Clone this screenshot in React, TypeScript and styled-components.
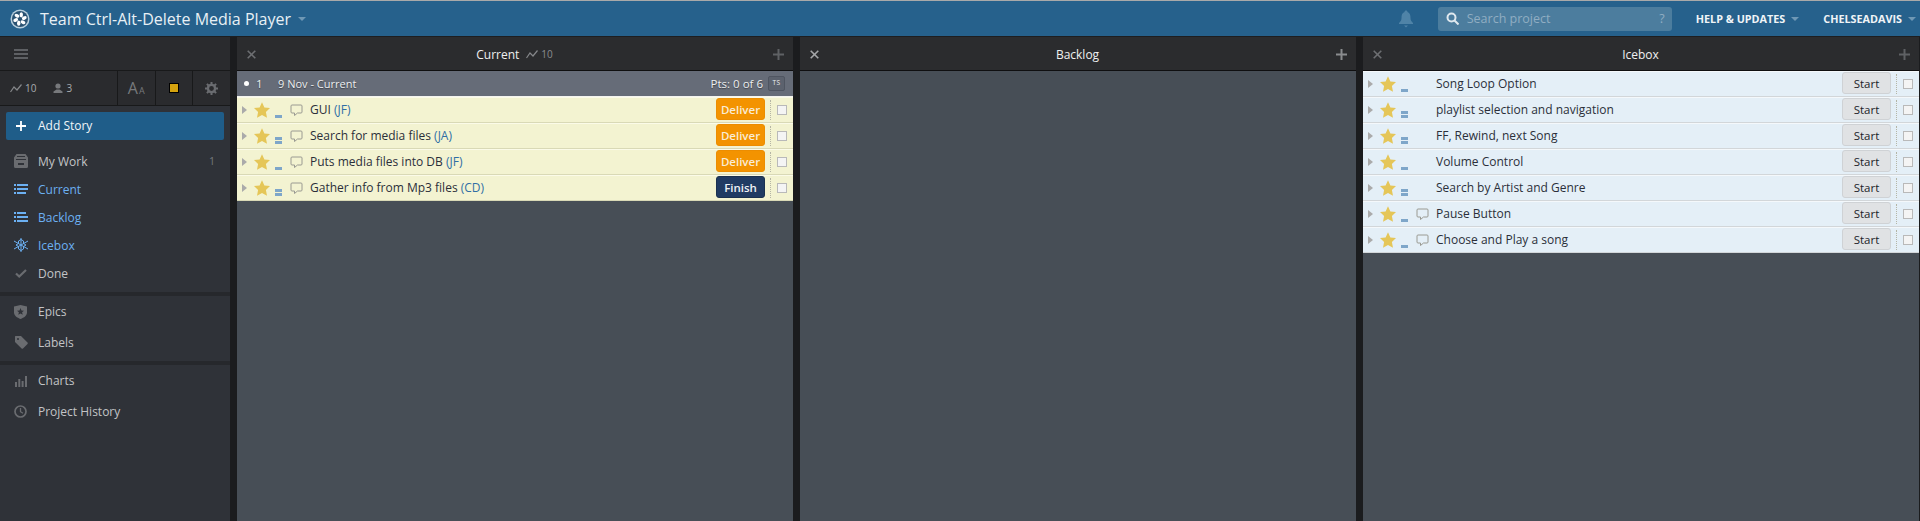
import React from "react";
import styled, { createGlobalStyle } from "styled-components";

const Global = createGlobalStyle`
  html, body {
    margin: 0;
    height: 100%;
    overflow: hidden;
    background: #1b1c1e;
    font-family: "Open Sans", "Liberation Sans", sans-serif;
  }
  * { box-sizing: border-box; }
`;

const Page = styled.div`
  width: 1920px;
  height: 521px;
  display: flex;
  flex-direction: column;
  overflow: hidden;
`;

const TopBar = styled.header`
  height: 37px;
  flex: none;
  background: #26618c;
  border-top: 1px solid #a9a9a9;
  border-bottom: 1px solid #1d1e20;
  display: flex;
  align-items: center;
  padding: 0 4px 0 10px;
  color: #fff;
`;
const Logo = styled.svg`
  width: 20px;
  height: 20px;
  flex: none;
`;
const ProjectName = styled.div`
  margin-left: 10px;
  font-size: 16px;
  line-height: 24px;
  color: #e8f0f5;
`;
const Caret = styled.span`
  display: inline-block;
  width: 0;
  height: 0;
  margin-left: ${(p) => p.$gap ?? 6}px;
  border-left: 4px solid transparent;
  border-right: 4px solid transparent;
  border-top: 4px solid #6f98b5;
`;
const TopRight = styled.div`
  margin-left: auto;
  display: flex;
  align-items: center;
`;
const Bell = styled.svg`
  width: 14px;
  height: 18px;
  margin-right: 25px;
`;
const Search = styled.div`
  width: 234px;
  height: 24px;
  border-radius: 3px;
  background: #4c7d9e;
  display: flex;
  align-items: center;
  padding: 0 7px 0 8px;
  font-size: 12.5px;
  color: #90adc2;
`;
const SearchText = styled.span`
  margin-left: 8px;
  flex: 1;
`;
const TopLink = styled.div`
  font-size: 10.8px;
  font-weight: 700;
  color: #f0f4f7;
  margin-left: 24px;
  display: flex;
  align-items: center;
`;

const Main = styled.div`
  flex: 1;
  display: flex;
  min-height: 0;
`;

const Sidebar = styled.aside`
  width: 230px;
  flex: none;
  background: #2f3238;
  display: flex;
  flex-direction: column;
`;
const SideTop = styled.div`
  height: 34px;
  background: #2a2b2e;
  border-bottom: 1px solid #18191a;
  display: flex;
  align-items: center;
  padding-left: 14px;
`;
const Hamburger = styled.span`
  width: 14px;
  height: 10px;
  border-top: 2px solid #5e6064;
  border-bottom: 2px solid #5e6064;
  position: relative;
  &::after {
    content: "";
    position: absolute;
    left: 0;
    right: 0;
    top: 2px;
    height: 2px;
    background: #5e6064;
  }
`;
const StatRow = styled.div`
  height: 35px;
  background: #2a2b2e;
  border-bottom: 1px solid #18191a;
  display: flex;
  align-items: stretch;
`;
const Stats = styled.div`
  flex: 1;
  display: flex;
  align-items: center;
  padding-left: 10px;
  font-size: 10px;
  color: #a9abae;
`;
const Stat = styled.span`
  display: flex;
  align-items: center;
  gap: 3px;
  margin-right: 17px;
`;
const ToolCell = styled.div`
  width: 37.7px;
  border-left: 1px solid #18191a;
  display: flex;
  align-items: center;
  justify-content: center;
  color: #77797c;
`;
const FontBig = styled.span`
  font-size: 16px;
  line-height: 1;
`;
const FontSmall = styled.span`
  font-size: 9px;
  margin-left: 1px;
  line-height: 1;
  align-self: center;
  padding-top: 4px;
`;
const Swatch = styled.span`
  width: 10px;
  height: 10px;
  background: #d5a30f;
  border: 1px solid #000;
`;
const AddStory = styled.div`
  height: 28px;
  margin: 6px 6px 0;
  padding: 0 0 1px 10px;
  border-radius: 2px;
  background: #1f5d89;
  color: #f0f5f8;
  font-size: 12px;
  display: flex;
  align-items: center;
  gap: 12px;
`;
const NavGroup = styled.nav`
  display: flex;
  flex-direction: column;
  padding: ${(p) => p.$pad};
  border-bottom: ${(p) => (p.$line ? "4px solid #26282c" : "none")};
`;
const NavItem = styled.div`
  height: ${(p) => p.$h}px;
  display: flex;
  align-items: center;
  padding: 0 14px;
  font-size: 12px;
  color: ${(p) => (p.$active ? "#6cb0f2" : "#c3c4c6")};
`;
const NavIcon = styled.span`
  width: 24px;
  flex: none;
  display: flex;
  color: ${(p) => (p.$active ? "#6cb0f2" : "#6a6c70")};
`;
const NavCount = styled.span`
  margin-left: auto;
  font-size: 10.5px;
  color: #777a7e;
  margin-right: 1px;
`;

const Gutter = styled.div`
  width: 7px;
  flex: none;
  background: #1b1c1e;
`;
const Panel = styled.section`
  flex: none;
  width: 556px;
  display: flex;
  flex-direction: column;
  background: #474e56;
`;
const PanelHead = styled.div`
  height: 34px;
  flex: none;
  background: #2b2c2e;
  border-bottom: 1px solid #0f0f10;
  display: flex;
  align-items: center;
  justify-content: space-between;
  padding: 1px 9px 0 10px;
`;
const PanelTitle = styled.div`
  display: flex;
  align-items: center;
  font-size: 12px;
  color: #f0f0f0;
  gap: 7px;
`;
const PanelStat = styled.span`
  display: flex;
  align-items: center;
  gap: 3px;
  font-size: 10px;
  color: #8a8c8f;
`;
const IterationHead = styled.div`
  height: 26px;
  flex: none;
  background: #666c78;
  border-bottom: 1px solid #f4f4f0;
  color: #eceef0;
  font-size: 11px;
  display: flex;
  align-items: center;
  padding: 0 8px 0 7px;
  text-shadow: 0 1px 1px #3d4148;
`;
const Dot = styled.span`
  width: 5px;
  height: 5px;
  border-radius: 50%;
  background: #fff;
`;
const IterNum = styled.span`
  margin-left: 7px;
  width: 22px;
  font-size: 11.5px;
`;
const Pts = styled.span`
  margin-left: auto;
  font-size: 11.5px;
`;
const TsBadge = styled.span`
  margin-left: 5px;
  width: 17px;
  height: 15px;
  border: 1px solid #4f5561;
  border-radius: 2px;
  background: #5c626e;
  font-size: 6.5px;
  line-height: 12px;
  text-align: center;
  letter-spacing: 0.5px;
  text-shadow: none;
`;
const Row = styled.div`
  height: 26px;
  flex: none;
  display: flex;
  align-items: center;
  background: ${(p) => (p.$cold ? "#e4eff7" : "#f3f3d1")};
  border-top: 1px solid ${(p) => (p.$cold ? "#f4f8fb" : "#fbfbe8")};
  border-bottom: 1px solid ${(p) => (p.$cold ? "#d2d6d9" : "#d9d9b6")};
  padding-left: 5px;
`;
const Expander = styled.span`
  width: 0;
  height: 0;
  border-top: 4px solid transparent;
  border-bottom: 4px solid transparent;
  border-left: 5px solid #aaa;
  flex: none;
`;
const Star = styled.svg`
  width: 16px;
  height: 16px;
  margin-left: 7px;
  flex: none;
`;
const Estimate = styled.span`
  width: 7px;
  margin-left: 5px;
  flex: none;
  align-self: flex-end;
  margin-bottom: 4px;
  display: flex;
  flex-direction: column;
  gap: 1px;
`;
const EstimateBar = styled.span`
  height: 3px;
  background: #7ea6c9;
`;
const Comment = styled.svg`
  width: 13px;
  height: 13px;
  margin-left: 8px;
  flex: none;
`;
const NoComment = styled.span`
  width: 13px;
  margin-left: 8px;
  flex: none;
`;
const Title = styled.div`
  margin-left: 7px;
  padding-bottom: 1px;
  font-size: 12px;
  color: #2b2f3a;
`;
const Owner = styled.span`
  color: #2f6ea5;
`;
const ActionButton = styled.div`
  margin-left: auto;
  margin-bottom: 2px;
  width: 49px;
  height: 22px;
  border-radius: 3px;
  display: flex;
  align-items: center;
  justify-content: center;
  font-size: 11.5px;
  font-weight: ${(p) => (p.$kind === "start" ? 400 : 600)};
  background: ${(p) =>
    p.$kind === "deliver" ? "#f39300" : p.$kind === "finish" ? "#203b63" : "#e0e2e4"};
  color: ${(p) => (p.$kind === "start" ? "#20232a" : p.$kind === "finish" ? "#eef2f6" : "#f9ecd6")};
  border: 1px solid
    ${(p) => (p.$kind === "deliver" ? "#ec8d00" : p.$kind === "finish" ? "#1a3150" : "#cfd2d5")};
`;
const CheckCell = styled.div`
  margin-left: 5px;
  width: 23px;
  height: 20px;
  flex: none;
  border-left: 1px dotted #b5b5a5;
  display: flex;
  align-items: center;
  justify-content: flex-end;
  padding-right: 6px;
`;
const Check = styled.span`
  width: 10px;
  height: 10px;
  background: #f4f4f4;
  border: 1px solid #b9b9b9;
`;

const StarIcon = () => (
  <Star viewBox="0 0 16 16">
    <polygon points="8,0.3 10.4,5.4 16,6.100 11.900,10 13,15.700 8,12.900 3,15.700 4.100,10 0,6.100 5.600,5.400" fill="#e5c658" />
  </Star>
);
const CommentIcon = () => (
  <Comment viewBox="0 0 13 13">
    <path d="M2 1h9a1 1 0 0 1 1 1v6a1 1 0 0 1-1 1H7.500L4.500 11.500V9H2a1 1 0 0 1-1-1V2a1 1 0 0 1 1-1z" fill="none" stroke="#9a9a92" strokeWidth="1" />
  </Comment>
);
const TrendIcon = () => (
  <svg width="12" height="9" viewBox="0 0 12 9">
    <path d="M0.5 8L4 3l3 3 4.5-5.5" fill="none" stroke="#85878a" strokeWidth="1.2" />
  </svg>
);
const PersonIcon = () => (
  <svg width="10" height="10" viewBox="0 0 10 10">
    <circle cx="5" cy="3" r="2.6" fill="#77797c" />
    <path d="M0.5 10V8.5L3.5 6.5h3l3 2V10z" fill="#77797c" />
  </svg>
);
const Plus = ({ color, size = 11 }: { color: string; size?: number }) => (
  <svg width={size} height={size} viewBox="0 0 11 11">
    <path d="M5.5 0v11M0 5.5h11" stroke={color} strokeWidth="2" />
  </svg>
);
const Close = ({ color }: { color: string }) => (
  <svg width="9" height="9" viewBox="0 0 9 9">
    <path d="M0.7 0.7l7.6 7.6M8.3 0.7L0.7 8.3" stroke={color} strokeWidth="1.6" />
  </svg>
);
const ListIcon = ({ bars }: { bars: number[] }) => (
  <svg width="14" height="10" viewBox="0 0 14 10" fill="currentColor">
    {bars.map((w, i) => (
      <React.Fragment key={i}>
        <rect x="0" y={i * 4} width="2" height="2" />
        <rect x="3" y={i * 4} width={w} height="2" />
      </React.Fragment>
    ))}
  </svg>
);
const SnowIcon = () => (
  <svg width="16" height="14" viewBox="0 0 16 14" fill="none" stroke="currentColor" strokeWidth="1" style={{ marginLeft: -1 }}>
    <path d="M8 0v14M1 3l14 8M15 3L1 11" />
    <path d="M8 1.500l2.500 1.500v2.500l2.500 1.500-2.500 1.500v2.500L8 12.500l-2.500-1.500V8.500L3 7l2.500-1.500V3z" />
  </svg>
);
const WorkIcon = () => (
  <svg width="14" height="14" viewBox="0 0 14 14" fill="currentColor">
    <path d="M2.500 0h9L14 3.500v9a1.500 1.500 0 0 1-1.500 1.500h-11A1.500 1.500 0 0 1 0 12.500v-9z" />
    <path d="M3 2h8v1H3zM2 5h10v1H2zM4 9h6v2H4z" fill="#2f3238" />
  </svg>
);
const CheckIcon = () => (
  <svg width="12" height="9" viewBox="0 0 12 9" style={{ marginLeft: 1 }}>
    <path d="M1 4.5l3.2 3L11 1" fill="none" stroke="currentColor" strokeWidth="2.2" />
  </svg>
);
const ShieldIcon = () => (
  <svg width="13" height="14" viewBox="0 0 13 14" fill="currentColor">
    <path d="M0 1.5L6.5 0 13 1.5v6c0 3-3 5.200-6.500 6.500C3 12.700 0 10.500 0 7.500z" />
    <polygon points="6.500,3 7.500,5.500 10,5.700 8.100,7.300 8.700,9.800 6.500,8.500 4.300,9.800 4.900,7.300 3,5.700 5.500,5.500" fill="#2f3238" />
  </svg>
);
const TagIcon = () => (
  <svg width="13" height="13" viewBox="0 0 13 13" fill="currentColor" style={{ marginLeft: 1 }}>
    <path d="M0.500 0H6l6.500 6.500a1 1 0 0 1 0 1.400L8 12.500a1 1 0 0 1-1.400 0L0 6V0.500z" />
    <circle cx="3" cy="3" r="1" fill="#2f3238" />
  </svg>
);
const BarsIcon = () => (
  <svg width="12" height="12" viewBox="0 0 12 12" fill="currentColor" style={{ marginLeft: 1 }}>
    <rect x="0" y="7" width="2" height="5" />
    <rect x="3.300" y="4" width="2" height="8" />
    <rect x="6.600" y="6" width="2" height="6" />
    <rect x="10" y="1" width="2" height="11" />
  </svg>
);
const ClockIcon = () => (
  <svg width="13" height="13" viewBox="0 0 13 13" fill="none" stroke="currentColor" strokeWidth="1.700">
    <circle cx="6.500" cy="6.500" r="5.500" />
    <path d="M6.500 3v3.700l2.500 1.500" strokeWidth="1.300" />
  </svg>
);
const GearIcon = () => (
  <svg width="13" height="13" viewBox="0 0 13 13">
    <circle cx="6.500" cy="6.500" r="3.600" fill="none" stroke="#6a6c70" strokeWidth="2.400" />
    <path
      d="M6.500 0v13M0 6.500h13M1.900 1.900l9.200 9.200M11.100 1.900l-9.200 9.200"
      stroke="#6a6c70"
      strokeWidth="2"
      strokeDasharray="2.200 8.600"
    />
  </svg>
);

type Story = { title: string; owner?: string; points: 1 | 2; comment?: boolean; action: "deliver" | "finish" | "start" };

const current: Story[] = [
  { title: "GUI", owner: "JF", points: 1, comment: true, action: "deliver" },
  { title: "Search for media files", owner: "JA", points: 2, comment: true, action: "deliver" },
  { title: "Puts media files into DB", owner: "JF", points: 1, comment: true, action: "deliver" },
  { title: "Gather info from Mp3 files", owner: "CD", points: 2, comment: true, action: "finish" },
];

const icebox: Story[] = [
  { title: "Song Loop Option", points: 1, action: "start" },
  { title: "playlist selection and navigation", points: 2, action: "start" },
  { title: "FF, Rewind, next Song", points: 2, action: "start" },
  { title: "Volume Control", points: 1, action: "start" },
  { title: "Search by Artist and Genre", points: 2, action: "start" },
  { title: "Pause Button", points: 1, comment: true, action: "start" },
  { title: "Choose and Play a song", points: 1, comment: true, action: "start" },
];

const actionLabel = { deliver: "Deliver", finish: "Finish", start: "Start" };
const petals = [0, 60, 120, 180, 240, 300];

function StoryRow({ story, cold }: { story: Story; cold?: boolean }) {
  return (
    <Row $cold={cold}>
      <Expander />
      <StarIcon />
      <Estimate>
        {Array.from({ length: story.points }).map((_, i) => (
          <EstimateBar key={i} />
        ))}
      </Estimate>
      {story.comment ? <CommentIcon /> : <NoComment />}
      <Title>
        {story.title}
        {story.owner && (
          <>
            {" "}
            <Owner>({story.owner})</Owner>
          </>
        )}
      </Title>
      <ActionButton $kind={story.action}>{actionLabel[story.action]}</ActionButton>
      <CheckCell>
        <Check />
      </CheckCell>
    </Row>
  );
}

function App() {
  return (
    <Page>
      <Global />
      <TopBar>
        <Logo viewBox="0 0 20 20">
          <circle cx="10" cy="10" r="9.500" fill="#b9cfdd" />
          <circle cx="10" cy="10" r="8" fill="#2a5272" />
          <g fill="#fff">
            {petals.map((a) => (
              <ellipse key={a} cx="11.300" cy="5.800" rx="1.700" ry="2.600" transform={`rotate(${a} 10 10)`} />
            ))}
          </g>
        </Logo>
        <ProjectName>Team Ctrl-Alt-Delete Media Player</ProjectName>
        <Caret $gap={7} />
        <TopRight>
          <Bell viewBox="0 0 14 18">
            <path d="M7 0.500c1 0 1.500 0.700 1.500 1.500C11 3 11.500 5 11.500 8c0 2 .8 3.500 2.500 5v1H0v-1c1.700-1.500 2.500-3 2.500-5 0-3 .5-5 3-6C5.500 1.200 6 .5 7 .5zM5 15.500h4L7 17.500z" fill="#4f83a7" />
          </Bell>
          <Search>
            <svg width="13" height="13" viewBox="0 0 13 13" fill="none" stroke="#dfe8ee" strokeWidth="2">
              <circle cx="5.500" cy="5.500" r="4" />
              <path d="M8.500 8.500L12.500 12.500" />
            </svg>
            <SearchText>Search project</SearchText>
            <span>?</span>
          </Search>
          <TopLink>
            HELP &amp; UPDATES
            <Caret />
          </TopLink>
          <TopLink>
            CHELSEADAVIS
            <Caret />
          </TopLink>
        </TopRight>
      </TopBar>
      <Main>
        <Sidebar>
          <SideTop>
            <Hamburger />
          </SideTop>
          <StatRow>
            <Stats>
              <Stat>
                <TrendIcon />
                10
              </Stat>
              <Stat>
                <PersonIcon />3
              </Stat>
            </Stats>
            <ToolCell>
              <FontBig>A</FontBig>
              <FontSmall>A</FontSmall>
            </ToolCell>
            <ToolCell>
              <Swatch />
            </ToolCell>
            <ToolCell>
              <GearIcon />
            </ToolCell>
          </StatRow>
          <AddStory>
            <Plus color="#fff" size={10} />
            Add Story
          </AddStory>
          <NavGroup $pad="7px 0 5px" $line>
            <NavItem $h={28}>
              <NavIcon>
                <WorkIcon />
              </NavIcon>
              My Work
              <NavCount>1</NavCount>
            </NavItem>
            <NavItem $h={28} $active>
              <NavIcon $active>
                <ListIcon bars={[11, 11, 9]} />
              </NavIcon>
              Current
            </NavItem>
            <NavItem $h={28} $active>
              <NavIcon $active>
                <ListIcon bars={[9, 11, 11]} />
              </NavIcon>
              Backlog
            </NavItem>
            <NavItem $h={28} $active>
              <NavIcon $active>
                <SnowIcon />
              </NavIcon>
              Icebox
            </NavItem>
            <NavItem $h={28}>
              <NavIcon>
                <CheckIcon />
              </NavIcon>
              Done
            </NavItem>
          </NavGroup>
          <NavGroup $pad="0 0 3px" $line>
            <NavItem $h={31}>
              <NavIcon>
                <ShieldIcon />
              </NavIcon>
              Epics
            </NavItem>
            <NavItem $h={31}>
              <NavIcon>
                <TagIcon />
              </NavIcon>
              Labels
            </NavItem>
          </NavGroup>
          <NavGroup $pad="0">
            <NavItem $h={31}>
              <NavIcon>
                <BarsIcon />
              </NavIcon>
              Charts
            </NavItem>
            <NavItem $h={31}>
              <NavIcon>
                <ClockIcon />
              </NavIcon>
              Project History
            </NavItem>
          </NavGroup>
        </Sidebar>
        <Gutter />
        <Panel>
          <PanelHead>
            <Close color="#6d6f72" />
            <PanelTitle>
              Current
              <PanelStat>
                <TrendIcon />
                10
              </PanelStat>
            </PanelTitle>
            <Plus color="#5f6164" />
          </PanelHead>
          <IterationHead>
            <Dot />
            <IterNum>1</IterNum>
            <span>9 Nov - Current</span>
            <Pts>Pts: 0 of 6</Pts>
            <TsBadge>TS</TsBadge>
          </IterationHead>
          {current.map((story) => (
            <StoryRow key={story.title} story={story} />
          ))}
        </Panel>
        <Gutter />
        <Panel>
          <PanelHead>
            <Close color="#a5a7a9" />
            <PanelTitle>Backlog</PanelTitle>
            <Plus color="#8a8c8e" />
          </PanelHead>
        </Panel>
        <Gutter />
        <Panel>
          <PanelHead>
            <Close color="#6d6f72" />
            <PanelTitle>Icebox</PanelTitle>
            <Plus color="#5f6164" />
          </PanelHead>
          {icebox.map((story) => (
            <StoryRow key={story.title} story={story} cold />
          ))}
        </Panel>
      </Main>
    </Page>
  );
}

export default App;
